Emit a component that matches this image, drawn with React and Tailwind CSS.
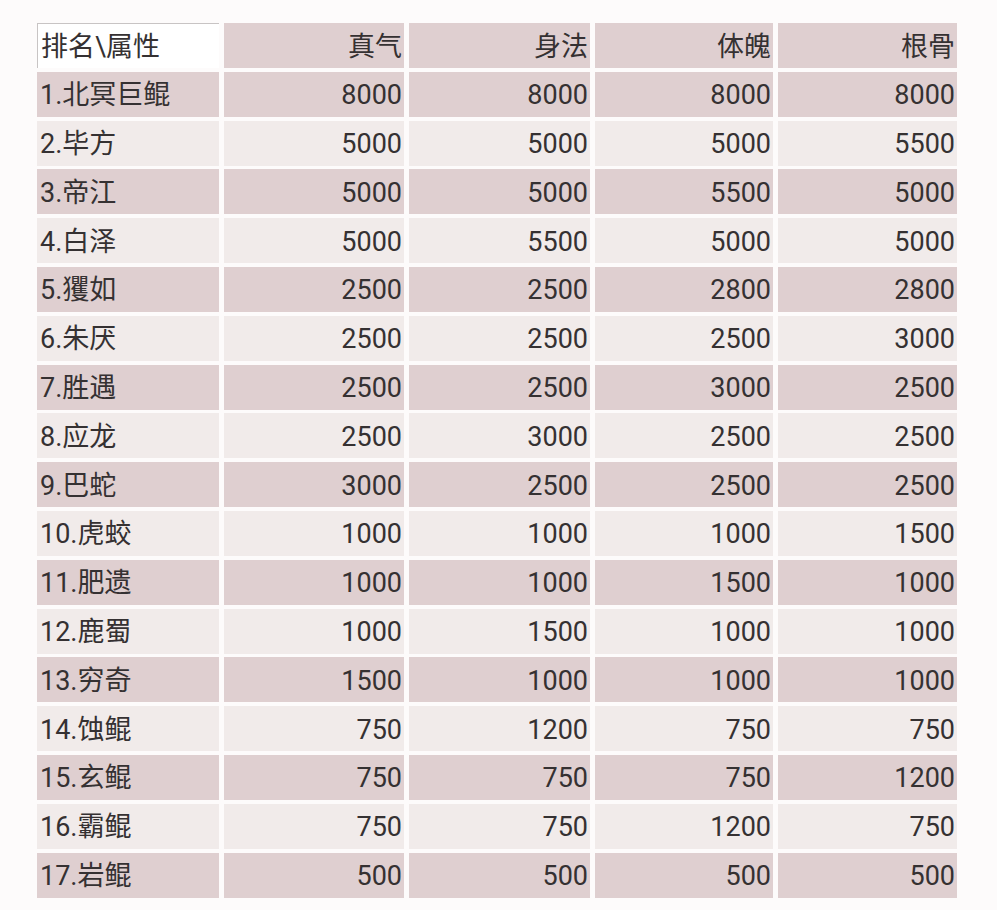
import React from 'react';

const headers = ['真气', '身法', '体魄', '根骨'];

const rows = [
  ['1.北冥巨鲲', 8000, 8000, 8000, 8000],
  ['2.毕方', 5000, 5000, 5000, 5500],
  ['3.帝江', 5000, 5000, 5500, 5000],
  ['4.白泽', 5000, 5500, 5000, 5000],
  ['5.玃如', 2500, 2500, 2800, 2800],
  ['6.朱厌', 2500, 2500, 2500, 3000],
  ['7.胜遇', 2500, 2500, 3000, 2500],
  ['8.应龙', 2500, 3000, 2500, 2500],
  ['9.巴蛇', 3000, 2500, 2500, 2500],
  ['10.虎蛟', 1000, 1000, 1000, 1500],
  ['11.肥遗', 1000, 1000, 1500, 1000],
  ['12.鹿蜀', 1000, 1500, 1000, 1000],
  ['13.穷奇', 1500, 1000, 1000, 1000],
  ['14.蚀鲲', 750, 1200, 750, 750],
  ['15.玄鲲', 750, 750, 750, 1200],
  ['16.霸鲲', 750, 750, 1200, 750],
  ['17.岩鲲', 500, 500, 500, 500],
];

const font = { fontFamily: 'Roboto, "Noto Sans CJK SC", sans-serif' };

const Cell = ({ children, dark, left }) => (
  <div
    className={`h-[45px] flex items-center pt-[3px] text-[27px] leading-none text-[#353132] ${
      left ? 'justify-start pl-[3px]' : 'justify-end pr-[2px]'
    } ${dark ? 'bg-[#dfcfd0]' : 'bg-[#f1ebea]'}`}
  >
    {children}
  </div>
);

export default function App() {
  return (
    <div className="w-[997px] h-[910px] bg-[#fdfbfb] pt-[23px] pl-[37px]" style={font}>
      <div className="grid grid-cols-[182px_180px_181px_178px_179px] gap-x-[5px] gap-y-[3.8px]">
        <div className="h-[45px] flex items-center pt-[3px] pl-[3px] text-[27px] leading-none text-[#353132] bg-white border-l border-t border-[#c8c4c4]">
          排名\属性
        </div>
        {headers.map((h) => (
          <Cell key={h} dark>
            {h}
          </Cell>
        ))}
        {rows.map((r, i) => {
          const dark = i % 2 === 0;
          return r.map((v, j) => (
            <Cell key={`${i}-${j}`} dark={dark} left={j === 0}>
              {v}
            </Cell>
          ));
        })}
      </div>
    </div>
  );
}
